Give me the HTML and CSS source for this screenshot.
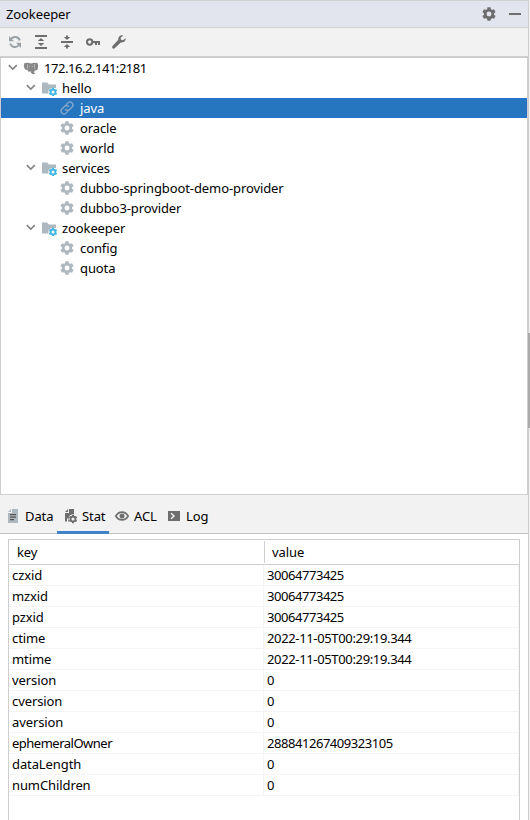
FILE: index.html
```html
<!DOCTYPE html>
<html lang="en">
<head>
<meta charset="utf-8">
<title>Zookeeper</title>
<link rel="stylesheet" href="styles.css">
</head>
<body>
<svg class="defs" aria-hidden="true">
  <symbol id="gear" viewBox="0 0 16 16"><circle cx="8" cy="8" r="3.800" fill="none" stroke="currentColor" stroke-width="2.700"/><path id="teeth" fill="currentColor" d="M6.500 1.300h3l.6 3H5.900zM6.500 14.700h3l.6-3H5.900z"/><use href="#teeth" transform="rotate(60 8 8)"/><use href="#teeth" transform="rotate(120 8 8)"/></symbol>
  <symbol id="chev" viewBox="0 0 16 16"><path d="M3.800 5.100 7.800 9.100l4-4" fill="none" stroke="#828282" stroke-width="1.500"/></symbol>
  <symbol id="folder" viewBox="0 0 16 16"><path fill="#aeb8bf" d="M1 2.500h5l2 2h7V8h-2l-1 .5-2-.3L7.500 10v3.500H1z"/><g color="#40b6e0"><use href="#gear" x="7" y="7" width="10" height="10"/></g></symbol>
</svg>
<main class="window">
  <header class="title"><h1>Zookeeper</h1>
    <svg class="icon"><use href="#gear"/></svg>
    <svg class="icon"><path fill="#6e6e6e" d="M2 7h12v2H2z"/></svg>
  </header>
  <nav class="tools">
    <svg class="icon pale" viewBox="0 0 16 16"><path d="M12.800 6.500A5 5 0 0 0 4 5M3.200 9.500A5 5 0 0 0 12 11" fill="none" stroke="currentColor" stroke-width="1.900"/><path fill="currentColor" d="M2 2v5.300h5zM14 14V8.700H9z"/></svg>
    <svg class="icon" viewBox="0 0 16 16"><path fill="currentColor" d="M2 1h12v2H2zM2 13h12v2H2zM8 4l3.200 3H4.800zM8 12 4.800 9h6.400z"/></svg>
    <svg class="icon" viewBox="0 0 16 16"><path fill="currentColor" d="M2 7h12v2H2zM8 6 4.800 3H7V1.500h2V3h2.200zM8 10l3.200 3H9v1.500H7V13H4.800z"/></svg>
    <svg class="icon" viewBox="0 0 16 16"><circle cx="4.700" cy="8" r="2.700" fill="none" stroke="currentColor" stroke-width="2"/><path fill="currentColor" d="M8 7h7v4h-2V9h-1v2h-2V9H8z"/></svg>
    <svg class="icon" viewBox="0 0 16 16"><path fill="currentColor" d="M14.600 4.300 12 6.200 10 5.800l-.4-2L12.200 1.400C9.500.8 7 2.800 7.300 5.800L1.500 12c-.8 1-.2 2.600 1.100 2.700.5 0 1-.2 1.300-.6l5.900-5.700c3 .5 5.200-1.500 4.800-4.100z"/></svg>
  </nav>
  <section class="tree">
    <div class="node l0"><svg class="arrow"><use href="#chev"/></svg><svg class="icon elephant" viewBox="0 0 16 16"><path fill="#888" d="M1.500 3 5 2.700l3 .8 3-.8 3.500.3.800 3-.8 3.800-2.900 1-.4 1-.2 1.200 1.500-.2-1 1.200-2 .3-1.500-1.500-.4-1.600-2 .8-.6-1.500-3.200-1.200L.7 6z"/><path d="M4.700 4 4.300 9M11.300 4l.4 5M6.500 6v1M9.500 6v1" fill="none" stroke="#c4c4c4" stroke-width=".7"/></svg><span class="host">172.16.2.141:2181</span></div>
    <div class="node l1"><svg class="arrow"><use href="#chev"/></svg><svg class="icon"><use href="#folder"/></svg><span>hello</span></div>
    <div class="node l2 selected"><svg class="icon" viewBox="0 0 16 16"><g fill="none" stroke="#89a9cb" stroke-width="1.300" stroke-linecap="round"><path d="M7.200 4.600 9 2.900a2.900 2.900 0 0 1 4.100 4.100L10.600 9.500a2.900 2.900 0 0 1-4.100 0"/><path d="M8.800 11.400 7 13.100A2.900 2.900 0 0 1 2.900 9L5.400 6.500a2.900 2.900 0 0 1 4.100 0"/></g></svg><span>java</span></div>
    <div class="node l2"><svg class="icon leaf"><use href="#gear"/></svg><span>oracle</span></div>
    <div class="node l2"><svg class="icon leaf"><use href="#gear"/></svg><span>world</span></div>
    <div class="node l1"><svg class="arrow"><use href="#chev"/></svg><svg class="icon"><use href="#folder"/></svg><span>services</span></div>
    <div class="node l2"><svg class="icon leaf"><use href="#gear"/></svg><span>dubbo-springboot-demo-provider</span></div>
    <div class="node l2"><svg class="icon leaf"><use href="#gear"/></svg><span>dubbo3-provider</span></div>
    <div class="node l1"><svg class="arrow"><use href="#chev"/></svg><svg class="icon"><use href="#folder"/></svg><span>zookeeper</span></div>
    <div class="node l2"><svg class="icon leaf"><use href="#gear"/></svg><span>config</span></div>
    <div class="node l2"><svg class="icon leaf"><use href="#gear"/></svg><span>quota</span></div>
  </section>
  <nav class="tabs">
    <div class="tab data"><svg class="icon" viewBox="0 0 16 16"><path fill="#aeb8bf" d="M7 1h6v14H3V5h4z"/><path fill="#aeb8bf" d="M6 1v3H3z"/><path fill="#555" d="M5 6h6v1.200H5zM5 8.500h6v1.200H5zM5 11h4v1.200H5z"/></svg><span>Data</span></div>
    <div class="tab stat active"><svg class="icon" viewBox="0 0 16 16"><path fill="#6e6e6e" d="M7 1h5v5L9 7 7.500 8 7 13.500H6v-3H5v3H3V5h4zM6 1v3H3z"/><circle cx="11" cy="11" r="4.500" fill="#f2f2f2"/><g color="#6e6e6e"><use href="#gear" x="6" y="6" width="10" height="10"/></g></svg><span>Stat</span></div>
    <div class="tab acl"><svg class="icon" viewBox="0 0 16 16"><path d="M1.800 8c3-5.200 9.400-5.200 12.400 0-3 5.200-9.400 5.200-12.400 0z" fill="none" stroke="currentColor" stroke-width="1.600"/><circle cx="8" cy="8" r="2.500" fill="currentColor"/></svg><span>ACL</span></div>
    <div class="tab log"><svg class="icon" viewBox="0 0 16 16"><path fill="currentColor" d="M2 3h12v10H2z"/><path d="m5 5.300 3 2.700-3 2.700" fill="none" stroke="#f2f2f2" stroke-width="1.500"/></svg><span>Log</span></div>
  </nav>
  <section class="content">
    <table>
      <thead><tr><th>key</th><th><span>value</span></th></tr></thead>
      <tbody>
        <tr><td>czxid</td><td>30064773425</td></tr>
        <tr><td>mzxid</td><td>30064773425</td></tr>
        <tr><td>pzxid</td><td>30064773425</td></tr>
        <tr><td>ctime</td><td class="time">2022-11-05T00:29:19.344</td></tr>
        <tr><td>mtime</td><td class="time">2022-11-05T00:29:19.344</td></tr>
        <tr><td>version</td><td>0</td></tr>
        <tr><td>cversion</td><td>0</td></tr>
        <tr><td>aversion</td><td>0</td></tr>
        <tr><td class="long">ephemeralOwner</td><td>288841267409323105</td></tr>
        <tr><td>dataLength</td><td>0</td></tr>
        <tr><td>numChildren</td><td>0</td></tr>
      </tbody>
    </table>
  </section>
</main>
<i class="thumb"></i>
</body>
</html>
```
FILE: styles.css
```css
* { box-sizing: border-box; }
body { margin: 0; display: flex; height: 820px; overflow: hidden; background: #f2f2f2; color: #000; font: 13px/20px "Noto Sans", "Open Sans", sans-serif; letter-spacing: -.1px; }
.defs { position: absolute; width: 0; height: 0; }
.window { width: 529px; height: 820px; display: flex; flex-direction: column; border-top: 1px solid #d1d1d1; border-right: 1px solid #cecece; background: #f2f2f2; }
.icon { width: 16px; height: 16px; flex: none; color: #6e6e6e; }
.arrow { width: 16px; height: 16px; flex: none; }
.title { height: 27px; flex: none; display: flex; align-items: center; gap: 10px; padding: 0 5px 0 6px; background: #e2e5ed; border-bottom: 1px solid #d1d1d1; }
.title h1 { margin: 0; flex: 1; font: inherit; }
.tools { height: 28px; flex: none; display: flex; align-items: center; gap: 10px; padding-left: 7px; }
.pale { color: #9aa2a7; }
.tree { height: 439px; flex: none; border: 1px solid #cecece; border-top-width: 2px; background: #fff; }
.node { height: 20px; display: flex; align-items: center; }
.node span { margin-left: 5px; }
.node .arrow + .icon { margin-left: 2px; }
.l0 { padding-left: 4px; }
.l1 { padding-left: 22px; }
.l2 { padding-left: 58px; }
.leaf { color: #aeb8bf; }
.selected { background: #2675bf; color: #fff; outline: 1px solid #2a6fc9; outline-offset: -1px; }
.host { letter-spacing: -.46px; }
.tabs { height: 39px; flex: none; display: flex; border-bottom: 1px solid #c4c4c4; padding-left: 5px; }
.tab { display: flex; align-items: center; height: 39px; border-bottom: 3px solid transparent; padding-top: 6px; }
.tab span { margin-left: 4px; }
.data { width: 52px; }
.stat { width: 52px; padding-left: 5px; border-bottom-color: #4083c9; }
.acl { width: 52px; padding-left: 5px; }
.log { padding-left: 5px; }
.content { flex: 1; background: #fff; padding: 5px 8px 0; }
table { display: block; width: 512px; height: 300px; border: 1px solid #cecece; border-bottom: 0; border-spacing: 0; }
thead, tbody { display: block; }
tr { display: grid; grid-template-columns: 255px 1fr; }
th { height: 25px; padding: 3px 8px 0; border-bottom: 1px solid #cecece; font-weight: 400; text-align: left; line-height: 19px; }
th + th { padding: 1px 0 0; }
th span { display: block; border-left: 1px solid #cecece; height: 22px; padding-left: 7px; line-height: 23px; }
td { height: 21px; padding: 0 3px; border-bottom: 1px solid #f4f4f4; border-right: 1px solid #f4f4f4; line-height: 20px; }
td + td { letter-spacing: -.45px; }
td.time { letter-spacing: -.35px; }
td.long { letter-spacing: -.5px; }
.thumb { position: absolute; left: 528px; top: 333px; width: 2px; height: 95px; background: #aaa; }
```
